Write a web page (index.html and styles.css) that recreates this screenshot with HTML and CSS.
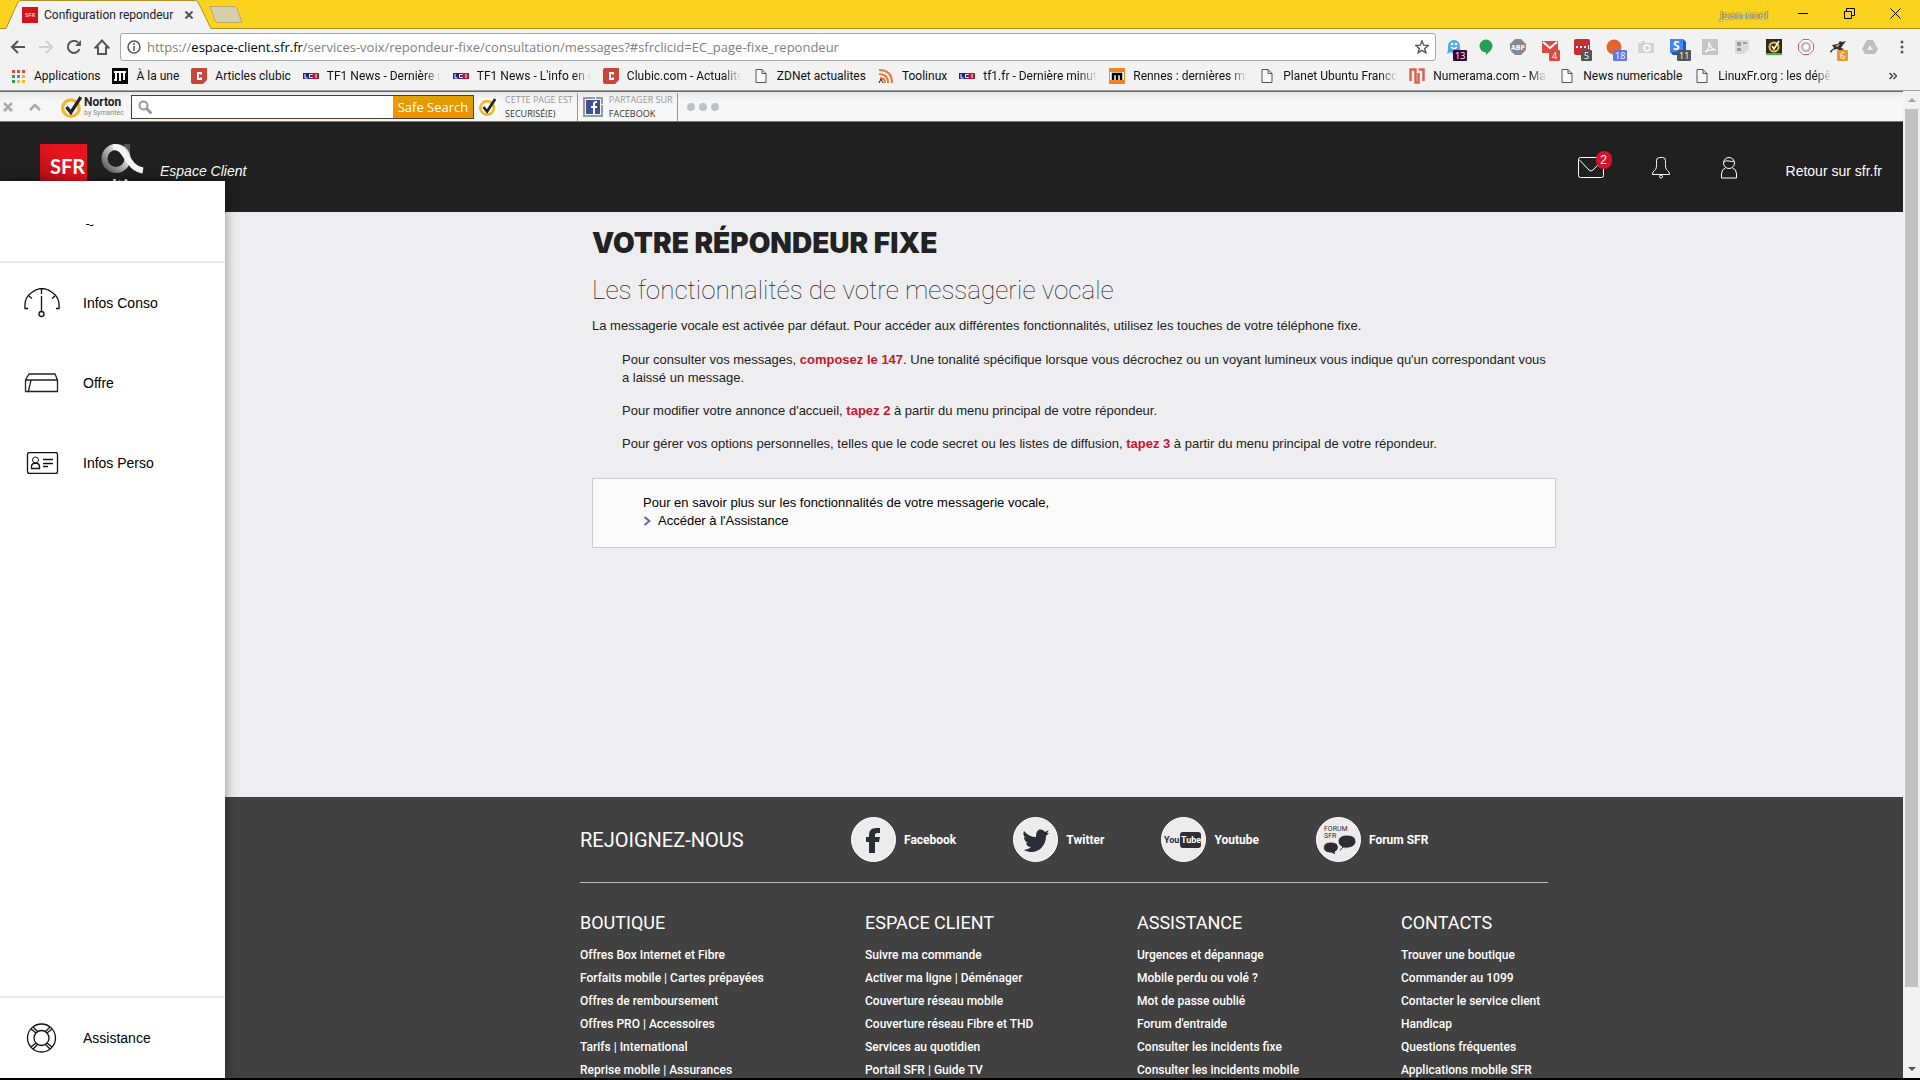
FILE: index.html
```html
<!DOCTYPE html>
<html lang="fr">
<head>
    <meta charset="UTF-8">
    <meta name="viewport" content="width=device-width, initial-scale=1.0">
    <title>Configuration repondeur</title>
    <link rel="stylesheet" href="styles.css">
</head>
<body>
    <!-- Shared icons -->
    <svg class="defs" width="0" height="0" aria-hidden="true">
        <symbol id="page" viewBox="0 0 11 14"><path d="M.5.5h6l4 4v9H.5zM6.500.5v4h4" fill="#f8f8f8" stroke="#555"/></symbol>
        <symbol id="clubic" viewBox="0 0 16 16"><path d="M0 2q0-2 2-2h14v12l-4 4H2q-2 0-2-2z" fill="#c9453a"/><path d="M10 6.500V5H7v6h3V9.500" fill="none" stroke="#fff" stroke-width="2"/></symbol>
        <symbol id="lci" viewBox="0 0 16 8"><path d="M0 1h8v6H0z" fill="#22228c"/><path d="M8 1h8v6H8z" fill="#b01c3c"/><path d="M2 2v4h2.500M9.500 2.500h-3v3h3M13 2v4" fill="none" stroke="#fff" stroke-width="1"/></symbol>
        <symbol id="check" viewBox="0 0 20 20"><circle cx="9" cy="11" r="7.500" fill="none" stroke="#f0b92d" stroke-width="3"/><path d="M5 10l4 5L18 1" fill="none" stroke="#222" stroke-width="3"/></symbol>
    </svg>

    <!-- Tab strip -->
    <div class="tab-strip">
        <div class="tab">
            <svg class="tab-shape" width="206" height="29" viewBox="0 0 206 29"><path d="M0 29L12 2q1-2 4-2h172q3 0 4 2l13 27z" fill="#f2f2f2"/><path d="M0 28.500L12 2q1-1.500 4-1.500h172q3 0 4 1.500l13 26.500" fill="none" stroke="#ad8f20"/></svg>
            <svg class="favicon" width="16" height="16" viewBox="0 0 16 16"><path d="M0 0h16v16H0z" fill="#d3141e"/><text x="3" y="10" font-size="6" fill="#fff">SFR</text></svg>
            <span class="tab-title">Configuration repondeur</span>
            <button class="tab-close" aria-label="Fermer l'onglet"><svg width="8" height="8" viewBox="0 0 8 8"><path d="M.5.5l7 7M7.500.5l-7 7" stroke="#555" stroke-width="2"/></svg></button>
        </div>
        <button class="new-tab" aria-label="Nouvel onglet"><svg width="34" height="17" viewBox="0 0 34 17"><path d="M1 .5h24q2 0 3 2l5 14H9q-2 0-3-2z" fill="#d8ceac" stroke="#b9a565"/></svg></button>
        <span class="profile">Jean-noel</span>
        <div class="window-buttons">
            <button aria-label="Réduire"><svg width="11" height="11" viewBox="0 0 11 11"><path d="M0 5.500h10" stroke="#000"/></svg></button>
            <button aria-label="Restaurer"><svg width="11" height="11" viewBox="0 0 11 11"><path d="M.5 3.500h7v7h-7zM2.500 3V.5h8v7H8" fill="none" stroke="#000"/></svg></button>
            <button aria-label="Fermer"><svg width="11" height="11" viewBox="0 0 11 11"><path d="M.5.5l10 10M10.500.5l-10 10" stroke="#000"/></svg></button>
        </div>
    </div>

    <!-- Toolbar -->
    <div class="toolbar">
        <div class="nav-buttons">
            <button aria-label="Retour"><svg width="16" height="16" viewBox="0 0 16 16"><path d="M15 8H2M8 2L2 8l6 6" fill="none" stroke="#555" stroke-width="2"/></svg></button>
            <button aria-label="Avancer"><svg width="16" height="16" viewBox="0 0 16 16"><path d="M1 8h13M8 2l6 6-6 6" fill="none" stroke="#d0d0d0" stroke-width="2"/></svg></button>
            <button aria-label="Actualiser"><svg width="16" height="16" viewBox="0 0 16 16"><path d="M13.500 10a6 6 0 1 1-1.500-6.500" fill="none" stroke="#555" stroke-width="2"/><path d="M15 1v6H9z" fill="#555"/></svg></button>
            <button aria-label="Accueil"><svg width="16" height="16" viewBox="0 0 16 16"><path d="M8 1.500L1.500 8.500H4V15h8V8.500h2.500z" fill="none" stroke="#555" stroke-width="2"/></svg></button>
        </div>
        <div class="address">
            <svg width="14" height="14" viewBox="0 0 14 14"><circle cx="7" cy="7" r="6" fill="none" stroke="#555" stroke-width="1.500"/><path d="M7 6v5M7 3v2" stroke="#555" stroke-width="1.500"/></svg>
            <p class="url">https://<b>espace-client.sfr.fr</b>/services-voix/repondeur-fixe/consultation/messages?#sfrclicid=EC_page-fixe_repondeur</p>
            <button aria-label="Ajouter aux favoris"><svg width="14" height="14" viewBox="0 0 14 14"><path d="M7 1l1.700 4.200 4.500.3-3.500 2.900 1.200 4.400L7 10.400l-3.900 2.400 1.200-4.400L.8 5.500l4.500-.3z" fill="none" stroke="#555" stroke-width="1.400"/></svg></button>
        </div>
        <div class="extensions">
            <button aria-label="Ghostery"><svg viewBox="0 0 16 16"><path d="M2 7a6 6 0 0 1 12 0v8l-3-2-3 3-3-3-4 2 1-4z" fill="#52a8ea"/><circle cx="6" cy="5" r="1.300" fill="#fff"/><circle cx="10" cy="5" r="1.300" fill="#fff"/><path d="M5 8q3 3 6 0" fill="none" stroke="#fff" stroke-width="1.500"/></svg><span class="count purple">13</span></button>
            <button aria-label="Hangouts"><svg viewBox="0 0 16 16"><circle cx="8" cy="7" r="6.500" fill="#2a9d58"/><path d="M8 12v4l5-5z" fill="#2a9d58"/></svg></button>
            <button aria-label="Adblock Plus"><svg viewBox="0 0 16 16"><path d="M5 0h6l5 5v6l-5 5H5l-5-5V5z" fill="#888"/><text x="1" y="11" font-size="7" font-weight="bold" fill="#fff">ABP</text></svg></button>
            <button aria-label="Gmail"><svg viewBox="0 0 16 16"><path d="M0 2h16v12H0z" fill="#d94b3e"/><path d="M1 3l7 6 7-6" fill="none" stroke="#fff" stroke-width="2"/></svg><span class="count red">4</span></button>
            <button aria-label="LastPass"><svg viewBox="0 0 16 16"><rect width="16" height="16" rx="2" fill="#c32f32"/><path d="M2 7h2v2H2zM6 7h2v2H6zM10 7h2v2h-2zM14 6h1v4h-1z" fill="#fff"/></svg><span class="count gray">5</span></button>
            <button aria-label="Alertes"><svg viewBox="0 0 16 16"><circle cx="8" cy="8" r="7.500" fill="#e8632c"/></svg><span class="count blue">18</span></button>
            <button aria-label="Capture"><svg viewBox="0 0 16 16"><path d="M0 4h4V2h3v2h9v10H0z" fill="#d3d3d3"/><circle cx="9" cy="9" r="3" fill="none" stroke="#fff" stroke-width="1.500"/></svg></button>
            <button aria-label="Stylish"><svg viewBox="0 0 16 16"><path d="M0 0h13l3 3v13H3l-3-3z" fill="#2457b5"/><path d="M0 0h13v13H0z" fill="#4285f4"/><text x="3" y="11" font-size="12" font-weight="bold" fill="#fff">S</text></svg><span class="count gray">11</span></button>
            <button aria-label="PDF"><svg viewBox="0 0 16 16"><path d="M0 0h16v16H0z" fill="#c6c6c6"/><path d="M3 13q5-3 4-10 1 7 7 8-6-1-11 2" fill="none" stroke="#f4f4f4" stroke-width="1.500"/></svg></button>
            <button aria-label="Lecture"><svg viewBox="0 0 16 16"><path d="M1 1h14v9l-5 5H1z" fill="#dadada"/><path d="M3 3h4v4H3zM3 9h4v3H3zM9 3h4v2H9z" fill="#999"/></svg></button>
            <button aria-label="Norton"><svg viewBox="0 0 16 16"><path d="M0 0h16v16H0z" fill="#2a2a2a"/><path d="M0 14h16v2H0z" fill="#39b93c"/><circle cx="8" cy="8" r="4.500" fill="none" stroke="#f3bf2d" stroke-width="2"/><path d="M6 7l2 3 5-8" fill="none" stroke="#fff" stroke-width="1.500"/></svg></button>
            <button aria-label="Bloqueur"><svg viewBox="0 0 16 16"><path d="M5 .5h6L15.500 5v6L11 15.500H5L.5 11V5z" fill="#fff" stroke="#e0506a"/><circle cx="8" cy="8" r="4" fill="none" stroke="#bbb" stroke-width="2.500"/></svg></button>
            <button aria-label="Blaireau"><svg viewBox="0 0 16 16"><path d="M0 12l4-3-2-3 6-1 2-3 2 1 4-1-3 4-2 3 3 1-3 2-4-2-4 1-2 3z" fill="#333"/><path d="M5 7l5-2-2 3z" fill="#e8b060"/></svg><span class="count orange">6</span></button>
            <button aria-label="Drive"><svg viewBox="0 0 16 16"><path d="M5 1h6l5 9-3 5H3l-3-5z" fill="#bdbdbd"/><path d="M8 6l3 5H5z" fill="#eee"/></svg></button>
            <button aria-label="Menu"><svg viewBox="0 0 16 16"><circle cx="8" cy="3" r="1.500" fill="#555"/><circle cx="8" cy="8" r="1.500" fill="#555"/><circle cx="8" cy="13" r="1.500" fill="#555"/></svg></button>
        </div>
    </div>

    <!-- Bookmarks -->
    <nav class="bookmarks">
        <a href="#"><svg width="16" height="16" viewBox="0 0 16 16"><path d="M2 2h3v3H2zM7 2h3v3H7zM12 2h3v3h-3z" fill="#dc4a3d"/><path d="M2 7h3v3H2zM2 12h3v3H2z" fill="#2a9d58"/><path d="M7 7h3v3H7z" fill="#4285f4"/><path d="M12 7h3v3h-3zM7 12h3v3H7zM12 12h3v3h-3z" fill="#f0b92d"/></svg><span>Applications</span></a>
        <a href="#"><svg width="16" height="16" viewBox="0 0 16 16"><path d="M0 0h16v16H0z"/><path d="M2 4h12M4 4v8M8 4v8M12 4v8M2 12h3M7 12h2" stroke="#fff" stroke-width="2"/></svg><span>À la une</span></a>
        <a href="#"><svg width="16" height="16"><use href="#clubic"/></svg><span>Articles clubic</span></a>
        <a href="#"><svg width="16" height="8"><use href="#lci"/></svg><span class="cut">TF1 News - Dernière minute</span></a>
        <a href="#"><svg width="16" height="8"><use href="#lci"/></svg><span class="cut">TF1 News - L'info en continu</span></a>
        <a href="#"><svg width="16" height="16"><use href="#clubic"/></svg><span class="cut">Clubic.com - Actualités</span></a>
        <a href="#"><svg width="16" height="14"><use href="#page"/></svg><span>ZDNet actualites</span></a>
        <a href="#"><svg width="16" height="16" viewBox="0 0 16 16"><path d="M1 2q13 0 13 13M1 6q9 0 9 9M2 10q5 0 5 5" fill="none" stroke="#e47a35" stroke-width="2"/><path d="M1 15l2-4 2 4" fill="none" stroke="#222"/></svg><span>Toolinux</span></a>
        <a href="#"><svg width="16" height="8"><use href="#lci"/></svg><span class="cut">tf1.fr - Dernière minute</span></a>
        <a href="#"><svg width="16" height="16" viewBox="0 0 16 16"><path d="M0 0h16v16H0z" fill="#ee8322"/><path d="M1 4h14v8H1z" fill="#fff"/><path d="M4 12V6h8v6M8 6v6" fill="none" stroke="#000" stroke-width="2.500"/></svg><span class="cut">Rennes : dernières minutes</span></a>
        <a href="#"><svg width="16" height="14"><use href="#page"/></svg><span class="cut">Planet Ubuntu Francophone</span></a>
        <a href="#"><svg width="16" height="16" viewBox="0 0 16 16"><path d="M1.500 13V1.500h5v13h3V5M9.500 1.500h5V13M6.500 14.500h3" fill="none" stroke="#dd604d" stroke-width="2.500"/></svg><span class="cut">Numerama.com - Magazine</span></a>
        <a href="#"><svg width="16" height="14"><use href="#page"/></svg><span>News numericable</span></a>
        <a href="#"><svg width="16" height="14"><use href="#page"/></svg><span class="cut">LinuxFr.org : les dépêches</span></a>
        <button class="more" aria-label="Autres favoris"><svg width="8" height="8" viewBox="0 0 8 8"><path d="M.5 1l3 3-3 3M4.500 1l3 3-3 3" fill="none" stroke="#444" stroke-width="1.500"/></svg></button>
    </nav>

    <div class="window">
        <div class="page">
            <!-- Norton bar -->
            <div class="norton">
                <button class="norton-x" aria-label="Fermer la barre"><svg width="10" height="10" viewBox="0 0 10 10"><path d="M1 1l8 8M9 1L1 9" stroke="#aaa" stroke-width="2.500"/></svg></button>
                <button class="norton-up" aria-label="Masquer la barre"><svg width="12" height="8" viewBox="0 0 12 8"><path d="M1 7l5-5 5 5" fill="none" stroke="#aaa" stroke-width="2.500"/></svg></button>
                <div class="norton-logo">
                    <svg width="22" height="22"><use href="#check"/></svg>
                    <p><strong>Norton</strong><small>by Symantec</small></p>
                </div>
                <form class="search">
                    <svg width="14" height="14" viewBox="0 0 14 14"><circle cx="5.500" cy="5.500" r="4" fill="none" stroke="#999" stroke-width="2"/><path d="M8.500 8.500l5 5" stroke="#999" stroke-width="3"/></svg>
                    <input type="text" aria-label="Recherche">
                    <button type="button">Safe Search</button>
                </form>
                <a class="tile" href="#"><svg class="badge-check" width="18" height="18"><use href="#check"/></svg><span>CETTE PAGE EST<em>SECURISÉ(E)</em></span></a>
                <a class="tile" href="#"><svg width="20" height="20" viewBox="0 0 20 20"><path d="M12 1H1v18h18V8M13 1h6v6" fill="none" stroke="#999" stroke-width="2"/><path d="M3 3h14v14H3z" fill="#3f4f94"/><path d="M14 5h-1q-2 0-2 2v10M8 10h6" fill="none" stroke="#fff" stroke-width="2"/></svg><span>PARTAGER SUR<em>FACEBOOK</em></span></a>
                <svg class="dots" width="34" height="10" viewBox="0 0 34 10"><circle cx="5" cy="5" r="4" fill="#bcc2c9"/><circle cx="17" cy="5" r="4" fill="#bcc2c9"/><circle cx="29" cy="5" r="4" fill="#bcc2c9"/></svg>
            </div>

            <!-- Site header -->
            <header class="site-header">
                <a class="brand" href="#">
                    <svg width="48" height="48" viewBox="0 0 48 48"><defs><linearGradient id="sfr" x1="0" y1="1" x2="1" y2="0"><stop offset="0" stop-color="#a80e15"/><stop offset=".6" stop-color="#e8141e"/></linearGradient></defs><path d="M0 0h47v48H0z" fill="url(#sfr)"/><text class="sfr-text" x="10" y="30" font-size="20" fill="#fff">SFR</text></svg>
                    <svg class="altice" width="44" height="50" viewBox="0 0 44 50"><defs><linearGradient id="alt" x1="0" y1="1" x2="1" y2="0"><stop offset="0" stop-color="#555"/><stop offset=".7" stop-color="#ddd"/></linearGradient></defs><path d="M23 0h6v12h-6z" fill="#555"/><circle cx="15" cy="14.500" r="11.500" fill="none" stroke="url(#alt)" stroke-width="6"/><path d="M12 3c14-1 13 21 30 23.500" fill="none" stroke="#f4f4f4" stroke-width="6"/><text class="sfr-text" x="2" y="49" font-size="18" fill="#fff">altice</text></svg>
                    <span>Espace Client</span>
                </a>
                <nav class="account">
                    <a href="#" class="mail" aria-label="Messages"><svg width="26" height="22" viewBox="0 0 26 22"><rect x=".5" y=".5" width="25" height="20" rx="2" fill="none" stroke="#fff"/><path d="M1 2.500L11 13q2 2 4 0L25 2.500" fill="none" stroke="#fff"/></svg><span>2</span></a>
                    <a href="#" aria-label="Notifications"><svg width="22" height="22" viewBox="-2 0 22 22"><path d="M.5 17.500q0-3 2-4c2-1 2-4 2-7v-3q0-3 3-3h3q3 0 3 3v3c0 3 0 6 2 7q2 1 2 4z" fill="none" stroke="#fff"/><circle cx="9" cy="19.500" r="1.500" fill="none" stroke="#fff"/></svg></a>
                    <a href="#" aria-label="Mon compte"><svg width="22" height="22" viewBox="-2 0 22 22"><circle cx="9" cy="6" r="5.500" fill="none" stroke="#fff"/><path d="M4 5q2-2 5-1t5 0M5.500 11q-4 1-4 6v4h15v-4q0-5-4-6" fill="none" stroke="#fff"/></svg></a>
                    <a href="#">Retour sur sfr.fr</a>
                </nav>
            </header>

            <main>
                <div class="container">
                    <h1>VOTRE RÉPONDEUR FIXE</h1>
                    <h2>Les fonctionnalités de votre messagerie vocale</h2>
                    <p>La messagerie vocale est activée par défaut. Pour accéder aux différentes fonctionnalités, utilisez les touches de votre téléphone fixe.</p>
                    <ul>
                        <li>Pour consulter vos messages, <strong>composez le 147</strong>. Une tonalité spécifique lorsque vous décrochez ou un voyant lumineux vous indique qu'un correspondant vous a laissé un message.</li>
                        <li>Pour modifier votre annonce d'accueil, <strong>tapez 2</strong> à partir du menu principal de votre répondeur.</li>
                        <li>Pour gérer vos options personnelles, telles que le code secret ou les listes de diffusion, <strong>tapez 3</strong> à partir du menu principal de votre répondeur.</li>
                    </ul>
                    <div class="help-box">
                        <p>Pour en savoir plus sur les fonctionnalités de votre messagerie vocale,</p>
                        <a href="#"><svg width="8" height="10" viewBox="0 0 8 10"><path d="M1.500 1l5 4-5 4" fill="none" stroke="#6a63a0" stroke-width="2"/></svg>Accéder à l'Assistance</a>
                    </div>
                </div>
            </main>

            <footer>
                <div class="container">
                    <div class="social">
                        <h3>REJOIGNEZ-NOUS</h3>
                        <a href="#"><svg viewBox="0 0 45 45"><circle cx="22.500" cy="22.500" r="22" fill="#ececec" stroke="#fff"/><path d="M29 11h-4q-7 0-7 7v2h-3v5h3v11h6V25h4l1-5h-5v-2q0-2 2-2h3z" fill="#2d2d35"/></svg>Facebook</a>
                        <a href="#"><svg viewBox="0 0 45 45"><circle cx="22.500" cy="22.500" r="22" fill="#ececec" stroke="#fff"/><path d="M11 14q5 6 12 6c0-10 7-8 9-5l4-2-2 3 2 0-3 3c0 12-11 20-22 14q4 0 7-3-4 0-5-4h2q-4-2-4-6l2 1q-4-3-2-7z" fill="#2d2d35"/></svg>Twitter</a>
                        <a href="#"><svg viewBox="0 0 45 45"><circle cx="22.500" cy="22.500" r="22" fill="#ececec" stroke="#fff"/><rect x="19" y="15" width="21" height="16" rx="3" fill="#2d2d35"/><text class="tube" x="3" y="26" fill="#2d2d35">You</text><text class="tube" x="20" y="26" fill="#fff">Tube</text></svg>Youtube</a>
                        <a href="#"><svg viewBox="0 0 45 45"><circle cx="22.500" cy="22.500" r="22" fill="#ececec" stroke="#fff"/><text class="forum" x="8" y="14">FORUM</text><text class="forum" x="8" y="21">SFR</text><path d="M27 31l-3 4q-1-3 2-5c-7-4-4-12 5-12 13 0 12 15-4 13zM15 36c-10 0-10-11 0-11 9 0 9 8 4 10l1 3z" fill="#2d2d35" stroke="#ececec"/></svg>Forum SFR</a>
                    </div>
                    <div class="links">
                        <div>
                            <h4>BOUTIQUE</h4>
                            <p><a href="#">Offres Box Internet et Fibre</a></p>
                            <p><a href="#">Forfaits mobile</a> | <a href="#">Cartes prépayées</a></p>
                            <p><a href="#">Offres de remboursement</a></p>
                            <p><a href="#">Offres PRO</a> | <a href="#">Accessoires</a></p>
                            <p><a href="#">Tarifs</a> | <a href="#">International</a></p>
                            <p><a href="#">Reprise mobile</a> | <a href="#">Assurances</a></p>
                        </div>
                        <div>
                            <h4>ESPACE CLIENT</h4>
                            <p><a href="#">Suivre ma commande</a></p>
                            <p><a href="#">Activer ma ligne</a> | <a href="#">Déménager</a></p>
                            <p><a href="#">Couverture réseau mobile</a></p>
                            <p><a href="#">Couverture réseau Fibre et THD</a></p>
                            <p><a href="#">Services au quotidien</a></p>
                            <p><a href="#">Portail SFR</a> | <a href="#">Guide TV</a></p>
                        </div>
                        <div>
                            <h4>ASSISTANCE</h4>
                            <p><a href="#">Urgences et dépannage</a></p>
                            <p><a href="#">Mobile perdu ou volé ?</a></p>
                            <p><a href="#">Mot de passe oublié</a></p>
                            <p><a href="#">Forum d'entraide</a></p>
                            <p><a href="#">Consulter les incidents fixe</a></p>
                            <p><a href="#">Consulter les incidents mobile</a></p>
                        </div>
                        <div>
                            <h4>CONTACTS</h4>
                            <p><a href="#">Trouver une boutique</a></p>
                            <p><a href="#">Commander au 1099</a></p>
                            <p><a href="#">Contacter le service client</a></p>
                            <p><a href="#">Handicap</a></p>
                            <p><a href="#">Questions fréquentes</a></p>
                            <p><a href="#">Applications mobile SFR</a></p>
                        </div>
                    </div>
                </div>
            </footer>

            <!-- Side menu, over the page -->
            <aside class="side-menu">
                <div class="side-top"><svg width="8" height="3" viewBox="0 0 8 3"><path d="M0 .5h3l1 1h3V.5" fill="none" stroke="#000"/></svg></div>
                <a href="#"><svg width="36" height="30" viewBox="0 0 36 30"><path d="M4 20.500H1Q0 10 7 5q11-9 22 0 7 5 6 15.500h-3M17.500 1v5M5 8l3 2.500M31 8l-3 2.500M17.500 8v16" fill="none" stroke="#111" stroke-width="1.300"/><circle cx="17.500" cy="26" r="2.500" fill="none" stroke="#111" stroke-width="1.300"/></svg>Infos Conso</a>
                <a href="#"><svg width="36" height="20" viewBox="0 0 36 20"><path d="M1.500 7v11.500h32V7L31 1H5zM1.500 7h32M4.500 18L7 7" fill="none" stroke="#222" stroke-width="1.300"/></svg>Offre</a>
                <a href="#"><svg width="36" height="22" viewBox="0 0 36 22"><rect x="3.500" y=".5" width="30" height="21" rx="2" fill="none" stroke="#111" stroke-width="1.300"/><circle cx="11.500" cy="8" r="3" fill="none" stroke="#111"/><path d="M7.500 16.500v-2q0-3 4-3.500 4 .5 4 3.500v2zM19 7.500h10M19 11.500h10M19 14.500h5" fill="none" stroke="#111" stroke-width="1.300"/></svg>Infos Perso</a>
                <a href="#" class="side-bottom"><svg width="36" height="30" viewBox="0 0 36 30"><g fill="none" stroke="#111" stroke-width="1.300"><circle cx="17.500" cy="15" r="14"/><circle cx="17.500" cy="15" r="7.500"/><path d="M7 6l5 4M9 4l4.500 4.500M28 6l-5 4M26 4l-4.500 4.500M7 24l5-4M9 26l4.500-4.500M28 24l-5-4M26 26l-4.500-4.500"/></g></svg>Assistance</a>
            </aside>
        </div>
        <div class="scrollbar" aria-hidden="true"><i class="up"></i><i class="thumb"></i><i class="down"></i></div>
    </div>
</body>
</html>
```
FILE: styles.css
```css
/* Basic Reset */
* {
    box-sizing: border-box;
}

body, h1, h2, h3, h4, p, ul {
    margin: 0;
    padding: 0;
}

body {
    display: flex;
    flex-direction: column;
    height: 100vh;
    overflow: hidden;
    background-color: #f2f2f2;
    border-bottom: 2px solid #000;
    font-family: "Open Sans", "Segoe UI", sans-serif;
    font-size: 12px;
    color: #222;
}

a {
    color: inherit;
    text-decoration: none;
}

button {
    padding: 0;
    border: 0;
    background: none;
    font: inherit;
}

svg {
    display: block;
    flex-shrink: 0;
}

.defs {
    position: absolute;
}

/* Tab strip */
.tab-strip {
    display: flex;
    align-items: center;
    flex-shrink: 0;
    height: 29px;
    padding-left: 6px;
    background-color: #fbd31f;
    border-bottom: 1px solid #ad8f20;
}

.tab {
    position: relative;
    display: flex;
    align-items: center;
    width: 206px;
    height: 29px;
    padding: 2px 19px 0 16px;
}

.tab-shape {
    position: absolute;
    top: 0;
    left: 0;
}

.favicon,
.tab-title,
.tab-close {
    position: relative;
}

.tab-title {
    flex: 1;
    margin-left: 6px;
    font-family: Roboto, sans-serif;
    white-space: nowrap;
}

.new-tab {
    margin-left: -3px;
}

.profile {
    margin-left: auto;
    margin-right: 24px;
    color: #fff;
    font-size: 11px;
    text-shadow: 0 0 1px #000, 0 0 1px #000;
}

.window-buttons {
    display: flex;
    gap: 35px;
    padding: 0 19px 2px 6px;
}

/* Toolbar */
.toolbar {
    display: flex;
    align-items: center;
    flex-shrink: 0;
    height: 36px;
    padding: 0 10px;
}

.nav-buttons {
    display: flex;
    gap: 12px;
    width: 110px;
}

.address {
    display: flex;
    align-items: center;
    flex: 1;
    height: 28px;
    padding: 0 6px;
    background-color: #fff;
    border: 1px solid #a8a8a8;
    border-radius: 3px;
}

.url {
    flex: 1;
    margin-left: 6px;
    font-size: 13px;
    color: #808080;
}

.url b {
    font-weight: normal;
    color: #000;
}

.extensions {
    display: flex;
    gap: 16px;
    margin-left: 10px;
}

.extensions button {
    position: relative;
}

.extensions svg {
    width: 16px;
    height: 16px;
}

.count {
    position: absolute;
    top: 11px;
    left: 7px;
    min-width: 11px;
    padding: 0 2px;
    border-radius: 1px;
    color: #fff;
    font-size: 9px;
    line-height: 11px;
}

.purple { background-color: #38063c; }
.red { background-color: #d94b3e; }
.gray { background-color: #555; }
.blue { background-color: #5f7ae8; }
.orange { background-color: #e29a37; }

/* Bookmarks */
.bookmarks {
    display: flex;
    align-items: center;
    flex-shrink: 0;
    gap: 12px;
    height: 26px;
    padding: 0 23px 4px 10px;
    border-bottom: 1px solid #a0a0a0;
    color: #111;
    font-family: Roboto, sans-serif;
    white-space: nowrap;
}

.bookmarks a {
    display: flex;
    align-items: center;
    gap: 8px;
}

.cut {
    width: 114px;
    overflow: hidden;
    mask-image: linear-gradient(to right, #000 85%, transparent);
}

.more {
    margin-left: auto;
}

/* Browser window */
.window {
    display: flex;
    flex: 1;
    min-height: 0;
}

.page {
    position: relative;
    display: flex;
    flex-direction: column;
    flex: 1;
    overflow: hidden;
    font-family: "Liberation Sans", Arial, sans-serif;
}

.scrollbar {
    display: flex;
    flex-direction: column;
    align-items: center;
    width: 17px;
    background-color: #f1f1f1;
}

.scrollbar .up,
.scrollbar .down {
    margin: 7px 0;
    border: 4px solid transparent;
    border-top: 0;
    border-bottom-color: #a0a0a0;
}

.scrollbar .down {
    margin-top: auto;
    border: 4px solid transparent;
    border-top-color: #505050;
    border-bottom: 0;
}

.scrollbar .thumb {
    width: 13px;
    height: 89%;
    background-color: #c1c1c1;
}

/* Norton bar */
.norton {
    display: flex;
    align-items: center;
    flex-shrink: 0;
    height: 31px;
    background: linear-gradient(#e8e8e8, #f6f6f6 30%);
    border-top: 1px solid #666;
    border-bottom: 1px solid #777;
    font-family: "Open Sans", sans-serif;
    font-size: 11px;
}

.norton-x {
    width: 29px;
    padding-left: 3px;
}

.norton-logo {
    display: flex;
    align-items: center;
    gap: 1px;
    width: 70px;
    margin-left: 20px;
    font-family: Roboto, sans-serif;
}

.norton-logo strong,
.norton-logo small {
    display: block;
    font-size: 12px;
    line-height: 13px;
}

.norton-logo small {
    font-size: 7px;
    line-height: 8px;
    color: #888;
}

.search {
    display: flex;
    align-items: center;
    width: 343px;
    height: 24px;
    padding-left: 6px;
    background-color: #fff;
    border: 1px solid #4a4030;
}

.search input {
    flex: 1;
    min-width: 0;
    border: 0;
    background: none;
    outline: none;
}

.search button {
    width: 80px;
    height: 22px;
    background: linear-gradient(#e2a000, #f09000);
    color: #fff;
    font-size: 13px;
}

.tile {
    display: flex;
    align-items: center;
    gap: 6px;
    height: 28px;
    padding: 0 4px 0 5px;
    border-right: 1px solid #999;
    color: #999;
    font-size: 9px;
    line-height: 14px;
    white-space: nowrap;
}

.tile em {
    display: block;
    font-style: normal;
    color: #333;
}

.badge-check {
    background-color: #fff;
    margin-right: 2px;
}

.dots {
    margin-left: 8px;
}

/* Site header */
.site-header {
    display: flex;
    justify-content: space-between;
    flex-shrink: 0;
    height: 90px;
    padding: 22px 21px 0 40px;
    background-color: #202020;
    color: #fff;
    font-size: 14px;
}

.brand {
    display: flex;
    font-style: italic;
    line-height: 54px;
}

.altice {
    margin: 0 15px 0 13px;
}

.sfr-text {
    font-family: Lato, sans-serif;
    font-style: normal;
    font-weight: bold;
}

.account {
    display: flex;
    gap: 46px;
    line-height: 54px;
}

.account a {
    display: flex;
}

.account svg {
    margin-top: 13px;
}

.mail {
    position: relative;
}

.mail span {
    position: absolute;
    top: 7px;
    left: 18px;
    width: 16px;
    border-radius: 8px;
    background-color: #d3142c;
    font-size: 12px;
    line-height: 18px;
    text-align: center;
}

/* Main Content */
main {
    flex: 1 0 585px;
    padding-left: 225px;
    background-color: #eeeef0;
    font-size: 13px;
    line-height: 18px;
}

.container {
    max-width: 988px;
    margin: 0 auto;
    padding: 0 10px;
}

main .container {
    padding: 16px 2px 0 22px;
}

h1 {
    font-family: Inter, sans-serif;
    font-size: 28px;
    font-weight: 900;
    line-height: 30px;
}

h2 {
    margin: 17px 0 12px;
    font-family: Roboto, sans-serif;
    font-size: 26px;
    font-weight: 100;
    line-height: 30px;
}

main ul {
    margin: 16px 0 25px;
    padding-left: 30px;
    list-style: none;
}

main li {
    margin-bottom: 15px;
}

main strong {
    color: #c8172b;
}

.help-box {
    height: 70px;
    padding: 15px 50px;
    background-color: #fbfbfb;
    border: 1px solid #ccc;
    color: #000;
}

.help-box a {
    display: flex;
    align-items: center;
    gap: 7px;
}

/* Footer */
footer {
    flex: 0 0 281px;
    padding-left: 225px;
    overflow: hidden;
    background-color: #414141;
    color: #fff;
    font-family: Roboto, sans-serif;
}

.social {
    display: flex;
    align-items: center;
    gap: 57px;
    padding: 20px 0;
    border-bottom: 1px solid #bbb;
    font-weight: bold;
}

.social h3 {
    width: 214px;
    font-size: 20px;
    font-weight: 400;
}

.social a {
    display: flex;
    align-items: center;
    gap: 8px;
}

.social svg {
    width: 45px;
    height: 45px;
}

.tube {
    font-size: 9px;
}

.forum {
    font-size: 7px;
    font-weight: 400;
    fill: #333;
}

.links {
    display: grid;
    grid-template-columns: 285fr 272fr 264fr 147fr;
    margin-top: 28px;
    line-height: 23px;
    font-weight: 500;
}

.links h4 {
    margin-bottom: 9px;
    font-size: 18px;
    font-weight: 400;
    line-height: 24px;
}

/* Side menu */
.side-menu {
    position: absolute;
    top: 90px;
    left: 0;
    bottom: 0;
    display: flex;
    flex-direction: column;
    width: 225px;
    background-color: #fff;
    box-shadow: 0 0 12px rgba(0, 0, 0, 0.4);
    color: #000;
    font-size: 14px;
}

.side-top {
    height: 82px;
    padding: 43px 0 0 86px;
    border-bottom: 2px solid #eaeaea;
}

.side-menu a {
    display: flex;
    align-items: center;
    gap: 23px;
    height: 80px;
    padding-left: 24px;
}

.side-menu .side-bottom {
    height: 82px;
    margin-top: auto;
    border-top: 2px solid #eaeaea;
}
```
